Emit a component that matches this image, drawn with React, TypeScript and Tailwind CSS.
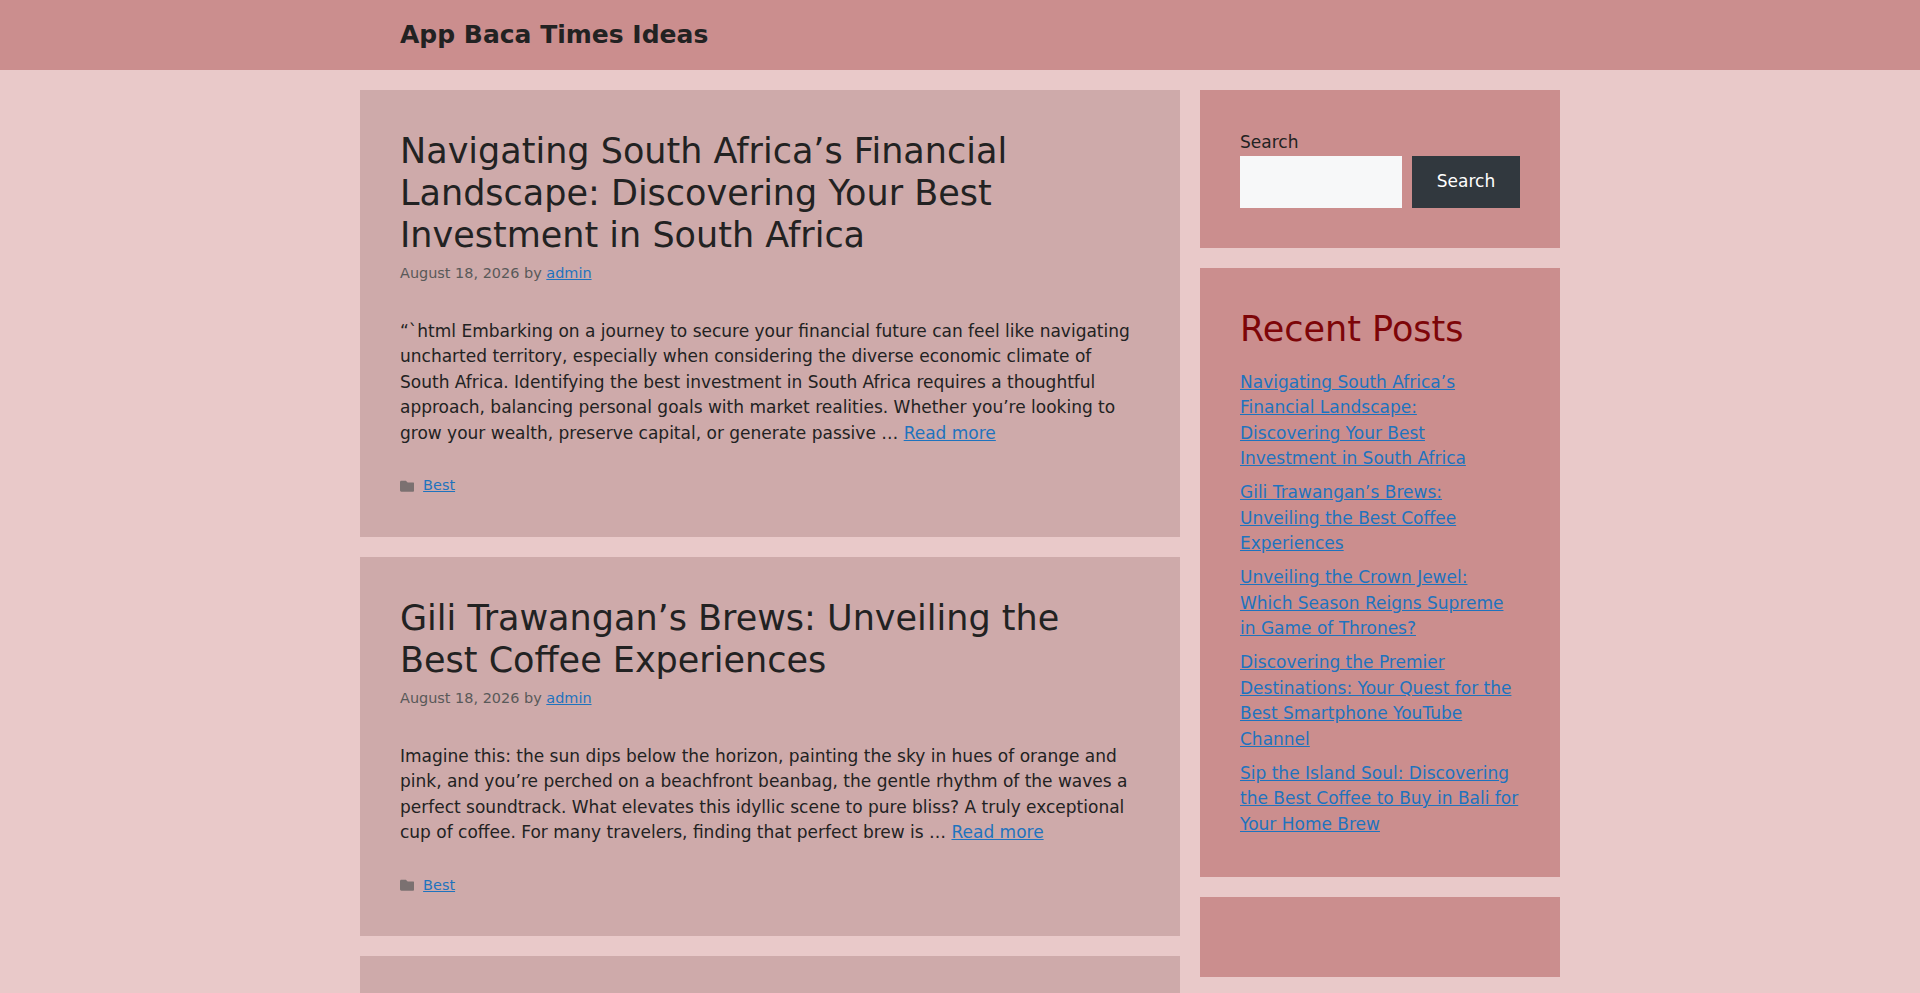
import React from "react";

type Post = {
  title: string;
  excerpt: string;
};

const posts: Post[] = [
  {
    title: "Navigating South Africa’s Financial Landscape: Discovering Your Best Investment in South Africa",
    excerpt:
      "“`html Embarking on a journey to secure your financial future can feel like navigating uncharted territory, especially when considering the diverse economic climate of South Africa. Identifying the best investment in South Africa requires a thoughtful approach, balancing personal goals with market realities. Whether you’re looking to grow your wealth, preserve capital, or generate passive …",
  },
  {
    title: "Gili Trawangan’s Brews: Unveiling the Best Coffee Experiences",
    excerpt:
      "Imagine this: the sun dips below the horizon, painting the sky in hues of orange and pink, and you’re perched on a beachfront beanbag, the gentle rhythm of the waves a perfect soundtrack. What elevates this idyllic scene to pure bliss? A truly exceptional cup of coffee. For many travelers, finding that perfect brew is …",
  },
];

const recent = [
  "Navigating South Africa’s Financial Landscape: Discovering Your Best Investment in South Africa",
  "Gili Trawangan’s Brews: Unveiling the Best Coffee Experiences",
  "Unveiling the Crown Jewel: Which Season Reigns Supreme in Game of Thrones?",
  "Discovering the Premier Destinations: Your Quest for the Best Smartphone YouTube Channel",
  "Sip the Island Soul: Discovering the Best Coffee to Buy in Bali for Your Home Brew",
];

function FolderIcon() {
  return (
    <svg viewBox="0 0 512 512" className="w-[14.45px] h-[14.45px] mr-[8.67px] shrink-0 fill-[#595959] opacity-70">
      <path d="M464 128H272l-64-64H48C21.49 64 0 85.49 0 112v288c0 26.51 21.49 48 48 48h416c26.51 0 48-21.49 48-48V176c0-26.51-21.49-48-48-48z" />
    </svg>
  );
}

function PostCard({ post }: { post: Post }) {
  return (
    <article className="bg-[#ceaaaa] p-10">
      <h2 className="text-[35px] leading-[42px] text-[#222222] font-normal">
        {post.title}
      </h2>
      <div className="mt-[7px] text-[14.45px] leading-[1.5] text-[#595959]">
        August 18, 2026 by{" "}
        <a href="#" className="text-[#1e73be] underline">admin</a>
      </div>
      <p className="mt-[34px] text-[17px] leading-[25.5px] text-[#222222]">
        {post.excerpt}{" "}
        <a href="#" className="text-[#1e73be] underline">Read more</a>
      </p>
      <div className="mt-[29px] flex items-center text-[14.45px] leading-[1.5]">
        <FolderIcon />
        <a href="#" className="text-[#1e73be] underline">Best</a>
      </div>
    </article>
  );
}

export default function App() {
  return (
    <div className="min-h-screen bg-[#e9c9c9] font-['DejaVu_Sans',sans-serif] text-[17px] text-[#222222]">
      {/* header */}
      <header className="bg-[#cb8e8e] h-[70px]">
        <div className="max-w-[1200px] mx-auto px-10 h-full flex items-center">
          <a href="#" className="text-[25px] leading-[1.5] font-bold text-[#222222]">
            App Baca Times Ideas
          </a>
        </div>
      </header>

      <div className="max-w-[1200px] mx-auto pt-5 flex gap-5 items-start">
        {/* posts */}
        <main className="w-[820px] flex flex-col gap-5">
          {posts.map((p) => (
            <PostCard key={p.title} post={p} />
          ))}
          <article className="bg-[#ceaaaa] h-[300px]" />
        </main>

        {/* sidebar */}
        <aside className="w-[360px] flex flex-col gap-5">
          <div className="bg-[#cb8e8e] p-10">
            <label className="block leading-[25.5px] text-[#222222]">Search</label>
            <div className="flex gap-[10px]">
              <input className="flex-1 min-w-0 h-[52px] bg-[#f7f8f9] px-4 outline-none" />
              <button className="h-[52px] w-[108px] bg-[#31383e] text-white text-[17px]">Search</button>
            </div>
          </div>

          <div className="bg-[#cb8e8e] p-10">
            <h2 className="text-[35px] leading-[42px] text-[#7d0508] font-normal mb-5">Recent Posts</h2>
            <ul className="flex flex-col gap-[8.5px]">
              {recent.map((r) => (
                <li key={r} className="leading-[25.5px]">
                  <a href="#" className="text-[#1e73be] underline">{r}</a>
                </li>
              ))}
            </ul>
          </div>

          <div className="bg-[#cb8e8e] h-20" />
        </aside>
      </div>
    </div>
  );
}
